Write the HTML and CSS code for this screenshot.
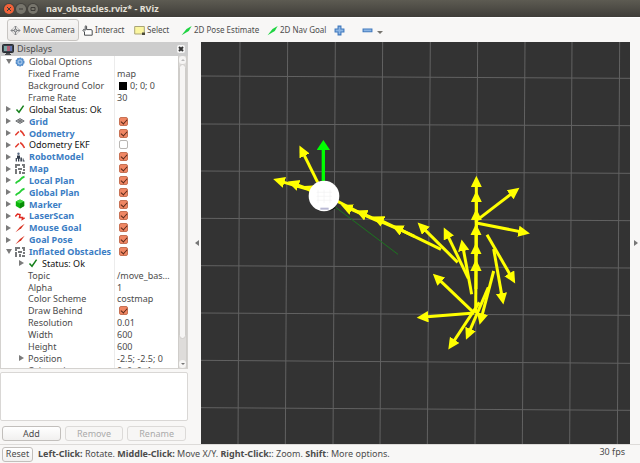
FILE: index.html
```html
<!DOCTYPE html>
<html lang="en">
<head>
<meta charset="utf-8">
<title>nav_obstacles.rviz* - RViz</title>
<link rel="stylesheet" href="styles.css">
</head>
<body>
<svg class="defs" aria-hidden="true">
  <symbol id="i-gear" viewBox="0 0 10 10"><circle cx="5" cy="5" r="3.9" fill="#5f97d3" stroke="#4a83c2" stroke-width="1.2" stroke-dasharray="1.6 .9"/><circle cx="5" cy="5" r="2" fill="none" stroke="#c5dbf1" stroke-width=".8"/></symbol>
  <symbol id="i-ok" viewBox="0 0 10 10"><path d="M1.5 5.5 4 8.2 8.6 1.6" fill="none" stroke="#15801b" stroke-width="1.5"/></symbol>
  <symbol id="i-grid" viewBox="0 0 10 10"><path d="M.8 5 5 2.6 9.2 5 5 7.4ZM3 3.8l4 2.4M7 3.8 3 6.2" fill="#b8b9bb" stroke="#6d7073" stroke-width="1"/></symbol>
  <symbol id="i-odom" viewBox="0 0 10 10"><path d="M.3 7.200 3.900 3.400M5.200 2.500Q7.500 4 9.500 8" fill="none" stroke="#e23a2c" stroke-width="1.500"/></symbol>
  <symbol id="i-robot" viewBox="0 0 10 10"><circle cx="3.5" cy="1.7" r="1.2" fill="#5a6b85"/><path d="M2 3.5h3v3.2H2zM.7 6h1.2v3.5H.7zM3 6.8h1.3v2.7H3zM5.4 5.4h1.5v4.1H5.4zM7.7 6.6h.9v1.9h1v1H7.700z" fill="#303a49"/></symbol>
  <symbol id="i-map" viewBox="0 0 10 10"><path d="M0 0h5v2H2v2H0zM7 0h3v4H8V2H7zM0 5h2v5H0zM3 4h4v2H3zM4 7h2v3H4zM8 5h2v2H8zM7 8h3v2H7z" fill="#77797b"/></symbol>
  <symbol id="i-path" viewBox="0 0 10 10"><path d="M.8 8.500C2 5.600 3.500 7 5 5S7 2 9.500 1.700" fill="none" stroke="#25cf35" stroke-width="1.900"/></symbol>
  <symbol id="i-marker" viewBox="0 0 10 10"><path d="M5 .5 9.200 2.500v4.600L5 9.500.8 7.100V2.500Z" fill="#0bb40b"/><path d="M5 .5 9.200 2.500 5 4.600.8 2.500Z" fill="#3ed83c"/><path d="M5 4.600 9.200 2.500v4.600L5 9.500Z" fill="#078a07"/></symbol>
  <symbol id="i-laser" viewBox="0 0 10 10"><path d="M.3 5.500 2.500 3 5 3.500 4.500 6.500H7.500L7.300 8.300 9.700 6.900" fill="none" stroke="#df2a21" stroke-width="1.500"/></symbol>
  <symbol id="i-goal" viewBox="0 0 10 10"><path d="M.5 9.200 5 3.900 9.700.8 6.300 5.300Z" fill="#d8301f"/></symbol>
  <symbol id="i-tool" viewBox="0 0 10 10"><path d="M.5 9.300 5 3.600 9.700.8 7.100 5.500Z" fill="#1fd442"/></symbol>
</svg>

<header class="titlebar">
  <button class="win close" aria-label="Close"><svg viewBox="0 0 10 10"><path d="M3 3l4 4M7 3 3 7"/></svg></button>
  <button class="win" aria-label="Minimize"><svg viewBox="0 0 10 10"><path d="M3 5h4"/></svg></button>
  <button class="win" aria-label="Maximize"><svg viewBox="0 0 10 10"><path d="M3 3.500h4v3H3z"/></svg></button>
  <h1>nav_obstacles.rviz* - RViz</h1>
</header>

<nav class="toolbar" aria-label="Tools">
  <button class="tool active"><svg viewBox="0 0 11 11"><path d="M1 5.500h9M5.500 1v9M3 3.500 1 5.500l2 2M8 3.500l2 2-2 2M4 2.500 5.500 1 7 2.500M4 8.500 5.500 10 7 8.500" fill="none" stroke="#85878a"/><circle cx="5.500" cy="5.500" r="1.500" fill="#d5d7d8" stroke="#707274"/></svg>Move Camera</button>
  <button class="tool interact"><svg viewBox="0 0 11 11"><path d="M2.500 10.200V7L.8 5.200 1.800 4.400l1.400 1V1.200Q3.900.3 4.600 1.200V4.600H9q1.200 0 1.200 1.200v4.400Z" fill="#fff" stroke="#4a4d50"/></svg>Interact</button>
  <button class="tool select"><svg viewBox="0 0 11 11"><path d="M.7 1.500h9.600v7.500H.7Z" fill="#fbf6a0" stroke="#a9a577"/><path d="M8 7.500h3V10H8z" fill="#4b4a3a"/></svg>Select</button>
  <button class="tool pose"><svg><use href="#i-tool"/></svg>2D Pose Estimate</button>
  <button class="tool nav"><svg><use href="#i-tool"/></svg>2D Nav Goal</button>
  <button class="tool plus" aria-label="Add tool"><svg viewBox="0 0 10 10"><path d="M3.700 1h2.600v2.700H9v2.600H6.300V9H3.700V6.300H1V3.700h2.700Z" fill="#8cb5e3" stroke="#3f78bd"/></svg></button>
  <button class="tool minus" aria-label="Remove tool"><svg viewBox="0 0 10 10"><path d="M1 3.700h8v2.400H1z" fill="#8cb5e3" stroke="#3f78bd"/></svg><i class="caret"></i></button>
</nav>

<main class="main">
  <section class="panel" aria-label="Displays">
    <div class="panel-head">
      <svg viewBox="0 0 12 11"><rect x=".5" y=".5" width="11" height="8" rx="1" fill="#39404a" stroke="#282c31"/><path d="M2 2h3v5H2z" fill="#7ca7a5"/><path d="M5 2h3v5H5z" fill="#b06077"/><path d="M8 2h2v5H8z" fill="#6475af"/><path d="M4 9h4v1h1v1H3v-1h1z" fill="#4b4e52"/></svg>
      <h2>Displays</h2>
      <button aria-label="Close panel"><svg viewBox="0 0 8 8"><path d="M2 2l4 4M6 2 2 6"/></svg></button>
    </div>
    <div class="tree-box">
      <div class="tree">
        <div class="row"><span class="name"><i class="open"></i><svg><use href="#i-gear"/></svg>Global Options</span></div>
        <div class="row"><span class="name leaf">Fixed Frame</span><span class="value">map</span></div>
        <div class="row"><span class="name leaf">Background Color</span><span class="value"><b class="swatch"></b>0; 0; 0</span></div>
        <div class="row"><span class="name leaf">Frame Rate</span><span class="value">30</span></div>
        <div class="row"><span class="name dark"><i class="shut"></i><svg><use href="#i-ok"/></svg>Global Status: Ok</span></div>
        <div class="row"><label class="name on" for="d1"><i class="shut"></i><svg><use href="#i-grid"/></svg>Grid</label><span class="value"><input type="checkbox" id="d1" checked></span></div>
        <div class="row"><label class="name on" for="d2"><i class="shut"></i><svg><use href="#i-odom"/></svg>Odometry</label><span class="value"><input type="checkbox" id="d2" checked></span></div>
        <div class="row"><label class="name dark" for="d3"><i class="shut"></i><svg><use href="#i-odom"/></svg>Odometry EKF</label><span class="value"><input type="checkbox" id="d3"></span></div>
        <div class="row"><label class="name on" for="d4"><i class="shut"></i><svg><use href="#i-robot"/></svg>RobotModel</label><span class="value"><input type="checkbox" id="d4" checked></span></div>
        <div class="row"><label class="name on" for="d5"><i class="shut"></i><svg><use href="#i-map"/></svg>Map</label><span class="value"><input type="checkbox" id="d5" checked></span></div>
        <div class="row"><label class="name on" for="d6"><i class="shut"></i><svg><use href="#i-path"/></svg>Local Plan</label><span class="value"><input type="checkbox" id="d6" checked></span></div>
        <div class="row"><label class="name on" for="d7"><i class="shut"></i><svg><use href="#i-path"/></svg>Global Plan</label><span class="value"><input type="checkbox" id="d7" checked></span></div>
        <div class="row"><label class="name on" for="d8"><i class="shut"></i><svg><use href="#i-marker"/></svg>Marker</label><span class="value"><input type="checkbox" id="d8" checked></span></div>
        <div class="row"><label class="name on" for="d9"><i class="shut"></i><svg><use href="#i-laser"/></svg>LaserScan</label><span class="value"><input type="checkbox" id="d9" checked></span></div>
        <div class="row"><label class="name on" for="d10"><i class="shut"></i><svg><use href="#i-goal"/></svg>Mouse Goal</label><span class="value"><input type="checkbox" id="d10" checked></span></div>
        <div class="row"><label class="name on" for="d11"><i class="shut"></i><svg><use href="#i-goal"/></svg>Goal Pose</label><span class="value"><input type="checkbox" id="d11" checked></span></div>
        <div class="row"><label class="name on" for="d12"><i class="open"></i><svg><use href="#i-map"/></svg>Inflated Obstacles</label><span class="value"><input type="checkbox" id="d12" checked></span></div>
        <div class="row"><span class="name dark sub"><i class="shut"></i><svg><use href="#i-ok"/></svg>Status: Ok</span></div>
        <div class="row"><span class="name leaf">Topic</span><span class="value">/move_bas…</span></div>
        <div class="row"><span class="name leaf">Alpha</span><span class="value">1</span></div>
        <div class="row"><span class="name leaf">Color Scheme</span><span class="value">costmap</span></div>
        <div class="row"><label class="name leaf" for="d13">Draw Behind</label><span class="value"><input type="checkbox" id="d13" checked></span></div>
        <div class="row"><span class="name leaf">Resolution</span><span class="value">0.01</span></div>
        <div class="row"><span class="name leaf">Width</span><span class="value">600</span></div>
        <div class="row"><span class="name leaf">Height</span><span class="value">600</span></div>
        <div class="row"><span class="name sub"><i class="shut"></i>Position</span><span class="value">-2.5; -2.5; 0</span></div>
        <div class="row"><span class="name leaf">Orientation</span><span class="value">0; 0; 0; 1</span></div>
      </div>
      <div class="scroll"><b class="end"><i class="up"></i></b><b class="thumb"></b><b class="end"><i class="down"></i></b></div>
    </div>
    <div class="help"></div>
    <div class="actions"><button>Add</button><button disabled>Remove</button><button disabled>Rename</button></div>
  </section>

  <button class="fold left" aria-label="Hide left panel"><i></i></button>

  <svg class="scene" viewBox="15 19 1287 1206" preserveAspectRatio="xMidYMid slice" role="img" aria-label="3D view">
    <defs>
      <marker id="head" markerUnits="userSpaceOnUse" markerWidth="36" markerHeight="36" refX="22" refY="17" orient="auto"><path d="M0 0 35 17 0 34Z" fill="#ff0"/></marker>
      <marker id="ghead" markerUnits="userSpaceOnUse" markerWidth="34" markerHeight="40" refX="18" refY="20" orient="auto"><path d="M0 0 30 20 0 40Z" fill="#0f0"/></marker>
    </defs>
    <g class="grid">
      <path d="M132 19 126 1225M275 19 268 1225M418 19 411 1225M560 19 552 1225M703 19 694 1225M845 19 837 1225M987 19 979 1225M1128 19 1121 1225M1271 19 1264 1225"/>
      <path d="M15 121 1302 128M15 265 1302 270M15 406 1302 413M15 548 1302 555M15 690 1302 697M15 832 1302 839M15 974 1302 983M15 1116 1302 1124"/>
    </g>
    <path d="M415 512 606 656" stroke="#1c741f" stroke-width="3"/>
    <g class="arrows">
      <path d="M841 560V433"/><path d="M841 600V478"/><path d="M841 660V532"/><path d="M840 700V577"/><path d="M840 760V634"/><path d="M839 832 840 684"/>
      <path d="M845 552 960 464"/><path d="M845 563 989 591"/><path d="M873 597 951 732"/><path d="M893 640 920 794"/>
      <path d="M893 706 854 855"/><path d="M877 755 815 900"/><path d="M850 800 764 931"/><path d="M835 832 675 845"/><path d="M830 828 720 723"/>
      <path d="M827 776 799 624"/><path d="M817 728 749 587"/><path d="M785 680 674 570"/><path d="M735 641 599 575"/>
      <path d="M655 602 541 548"/><path d="M605 580 491 530"/><path d="M560 562 447 513"/><path d="M500 536 400 484"/>
      <path d="M400 480 244 434"/><path d="M360 468 287 442"/><path d="M390 478 336 456"/><path d="M365 440 316 341"/>
    </g>
    <path class="goal" d="M382 445V325"/>
    <path d="M350 508h18v18zM418 506v12l-16 8z" fill="#080808"/>
    <circle cx="384" cy="481" r="46" fill="#fff"/>
    <path d="M362 470h46M362 482h46M362 494h46M366 462v40M384 462v40M402 462v40" stroke="#f1f1f3" stroke-width="2"/>
    <path d="M373 516h25v6h-25z" fill="#b9b9d4"/>
  </svg>

  <button class="fold right" aria-label="Hide right panel"><i></i></button>
</main>

<footer class="status">
  <button>Reset</button>
  <p><b>Left-Click:</b> Rotate. <b>Middle-Click:</b> Move X/Y. <b>Right-Click:</b>: Zoom. <b>Shift</b>: More options.</p>
  <output>30 fps</output>
</footer>
</body>
</html>
```
FILE: styles.css
```css
* { box-sizing: border-box; }

body {
  margin: 0;
  height: 100vh;
  display: flex;
  flex-direction: column;
  overflow: hidden;
  background: #f8f7f6;
  color: #4c4c4c;
  font: 9px/12px "Noto Sans", "Open Sans", sans-serif;
}

button {
  font: inherit;
  color: inherit;
  padding: 0;
  border: 0;
  background: none;
}

h1, h2, p { margin: 0; }
svg { flex: none; }
.defs { display: none; }

/* Window frame */
.titlebar {
  flex: none;
  height: 17px;
  display: flex;
  align-items: center;
  gap: 2px;
  padding-left: 4px;
  background: linear-gradient(#5d5b52, #3f3d39);
}
.titlebar h1 {
  margin-left: 6px;
  font-size: 9px;
  line-height: 16px;
  color: #e4e0d8;
}
.win {
  width: 10px;
  height: 10px;
  border-radius: 50%;
  background: #77756c;
  box-shadow: 0 0 0 1px #45433e;
}
.win.close { background: #f0623a; }
.win svg { display: block; fill: none; stroke: #3d3b37; }

/* Tools */
.toolbar {
  flex: none;
  height: 25px;
  display: flex;
  align-items: center;
  padding-left: 7px;
  border-top: 1px solid #fff;
}
.tool {
  display: flex;
  align-items: center;
  gap: 2px;
  white-space: nowrap;
  font-size: 8px;
}
.tool svg { width: 11px; height: 11px; }
.tool.active {
  height: 22px;
  width: 72px;
  padding-left: 2px;
  border: 1px solid #c8c5c2;
  border-radius: 3px;
  background: linear-gradient(#f6f5f4, #edebe9);
}
.interact { width: 55px; padding-left: 3px; }
.select { width: 47px; }
.pose { width: 86px; }
.nav { width: 67px; }
.plus { width: 28px; }
.caret {
  margin: 4px 0 0 2px;
  border: 3px solid transparent;
  border-top-color: #77756f;
  border-bottom: 0;
}

/* Body */
.main {
  flex: 1;
  min-height: 0;
  display: flex;
}
.panel {
  flex: none;
  width: 188px;
  display: flex;
  flex-direction: column;
}
.panel-head {
  height: 14px;
  display: flex;
  align-items: center;
  gap: 3px;
  padding: 0 3px 0 2px;
  background: #cdcdcd;
}
.panel-head > svg { width: 12px; height: 11px; }
.panel-head h2 { flex: 1; font-size: 9px; font-weight: 400; }
.panel-head button {
  width: 8px;
  height: 8px;
  border-radius: 2px;
  background: #f5f5f5;
}
.panel-head button svg { display: block; stroke: #333; stroke-width: 2; }

.tree-box {
  flex: 1;
  min-height: 0;
  display: flex;
  border: 1px solid #d4d2cf;
  border-top: 0;
  background: #fff;
  overflow: hidden;
}
.tree {
  flex: 1;
  height: calc(100% + 8px);
  display: grid;
  grid-auto-rows: 1fr;
  background: linear-gradient(#ececec, #ececec) 113px 0 / 1px 100% no-repeat;
}
.row {
  min-height: 0;
  display: grid;
  grid-template-columns: 113px 1fr;
  align-items: center;
  line-height: 11px;
  white-space: nowrap;
}
.name { display: flex; align-items: center; padding-left: 5px; }
.name svg { width: 10px; height: 10px; margin-right: 4px; }
.name i { width: 6px; margin-right: 3px; }
.name i::before { content: ""; display: block; width: 0; border: 3px solid transparent; }
.name .shut::before { border-left: 5px solid #7b7b7b; border-right-width: 0; }
.name .open::before { border-top: 5px solid #7b7b7b; border-bottom-width: 0; }
.name.leaf { padding-left: 27px; }
.name.sub { padding-left: 18px; }
.name.dark { color: #111; }
.name.on { color: #3b7dc4; font-weight: 700; }
.value { display: flex; align-items: center; padding-left: 3px; }
.swatch { width: 8px; height: 8px; margin: 0 3px 0 2px; background: #000; }

input[type="checkbox"] {
  appearance: none;
  width: 9px;
  height: 9px;
  margin: 0 0 0 2px;
  border: 1px solid #b9b6b3;
  border-radius: 2px;
  background: #fff;
}
input[type="checkbox"]:checked { border-color: #c87254; background: #ef8663; }
input[type="checkbox"]:checked::before {
  content: "";
  display: block;
  width: 3px;
  height: 5px;
  margin-left: 2px;
  border: solid #57291b;
  border-width: 0 1px 1px 0;
  transform: rotate(42deg);
}

.scroll {
  width: 9px;
  display: flex;
  flex-direction: column;
  border: solid #cfcdca;
  border-width: 0 1px;
  background: #dedcda;
}
.thumb {
  flex: 1;
  margin-bottom: 21px;
  border-radius: 4px;
  border: 1px solid #cfcdca;
  background: #f6f5f4;
}
.end { height: 8px; border-radius: 4px; background: #f6f5f4; display: grid; place-items: center; }
.up { border: 2px solid transparent; border-bottom-color: #bbb; border-top: 0; }
.down { border: 2px solid transparent; border-top-color: #777; border-bottom: 0; }

.help {
  height: 49px;
  margin-top: 3px;
  border: 1px solid #d9d7d5;
  border-radius: 2px;
  background: #fff;
}
.actions {
  display: grid;
  grid-template-columns: repeat(3, 1fr);
  gap: 4px;
  padding: 5px 2px 3px;
}
.actions button, .status button {
  height: 15px;
  border: 1px solid #c2bfbc;
  border-radius: 3px;
  background: linear-gradient(#fff, #f1f0ef);
}
.actions button:disabled { color: #aaa; border-color: #dcdad8; background: #f7f6f5; }

.fold { flex: none; width: 13px; display: grid; place-items: center; }
.fold.right { width: 10px; }
.fold i { border: 3px solid transparent; }
.fold.left i { border-right: 4px solid #777; border-left: 0; margin-left: 4px; }
.fold.right i { border-left: 4px solid #777; border-right: 0; margin-left: 2px; }

.scene { flex: 1; min-width: 0; height: 100%; background: #333; }
.grid { stroke: #626262; stroke-width: 3; }
.arrows path { stroke: #ff0; stroke-width: 9; marker-end: url(#head); }
.goal { stroke: #0f0; stroke-width: 10; marker-end: url(#ghead); }

/* Status line */
.status {
  flex: none;
  height: 19px;
  display: flex;
  align-items: center;
  gap: 5px;
  padding: 0 15px 0 2px;
  border-top: 1px solid #dddbd9;
}
.status button { width: 31px; }
.status p { flex: 1; white-space: nowrap; }
.status output { padding-bottom: 4px; }
```
